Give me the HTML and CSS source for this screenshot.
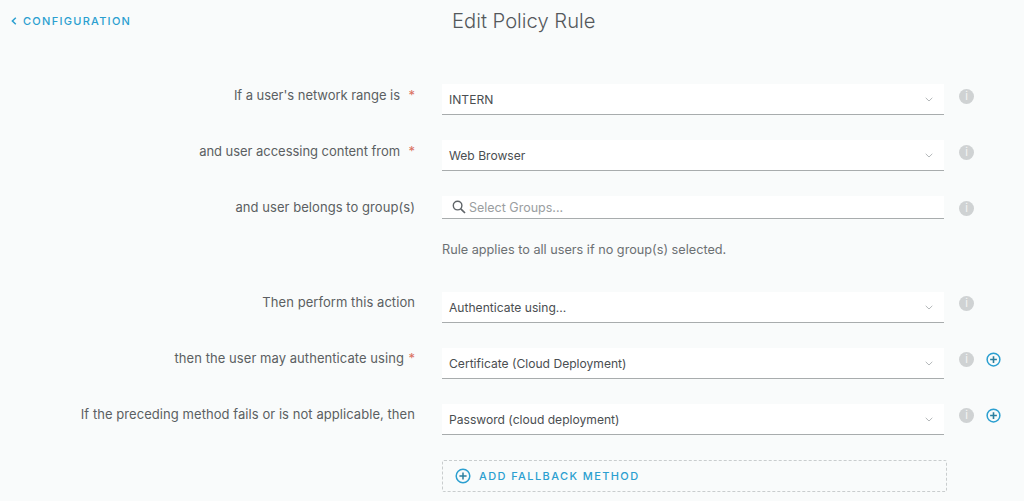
FILE: index.html
```html
<!DOCTYPE html>
<html lang="en">
<head>
<meta charset="utf-8">
<title>Edit Policy Rule</title>
<link rel="stylesheet" href="styles.css">
</head>
<body>
<header class="top">
  <a class="back" href="#"><svg class="chev" viewBox="0 0 6 8" width="6" height="8"><path d="M4.8 .8 1.4 4l3.4 3.2" fill="none" stroke="#2b9fd0" stroke-width="1.5"/></svg><span>CONFIGURATION</span></a>
  <h1 class="title">Edit Policy Rule</h1>
</header>
<main class="form">
  <div class="row">
    <label class="lab snug">If a user's network range is<span class="star">*</span></label>
    <div class="sel"><span>INTERN</span><svg class="caret" viewBox="0 0 8 5" width="8" height="5"><path d="M.7.8 4 4 7.3.8" fill="none" stroke="#b4b8ba" stroke-width="1"/></svg></div>
    <div class="acts"><span class="info">i</span></div>
  </div>
  <div class="row">
    <label class="lab snug">and user accessing content from<span class="star">*</span></label>
    <div class="sel"><span>Web Browser</span><svg class="caret" viewBox="0 0 8 5" width="8" height="5"><path d="M.7.8 4 4 7.3.8" fill="none" stroke="#b4b8ba" stroke-width="1"/></svg></div>
    <div class="acts"><span class="info">i</span></div>
  </div>
  <div class="row short">
    <label class="lab">and user belongs to group(s)</label>
    <div class="sel search"><svg class="mag" viewBox="0 0 14 14" width="14" height="14"><circle cx="5.6" cy="5.6" r="4.3" fill="none" stroke="#5f6468" stroke-width="1.4"/><path d="m8.8 8.8 4.2 4.2" stroke="#5f6468" stroke-width="1.7"/></svg><span class="ph">Select Groups...</span></div>
    <div class="acts"><span class="info">i</span></div>
  </div>
  <p class="hint">Rule applies to all users if no group(s) selected.</p>
  <div class="row alt">
    <label class="lab">Then perform this action</label>
    <div class="sel"><span>Authenticate using...</span><svg class="caret" viewBox="0 0 8 5" width="8" height="5"><path d="M.7.8 4 4 7.3.8" fill="none" stroke="#b4b8ba" stroke-width="1"/></svg></div>
    <div class="acts"><span class="info">i</span></div>
  </div>
  <div class="row alt">
    <label class="lab">then the user may authenticate using<span class="star tight">*</span></label>
    <div class="sel"><span>Certificate (Cloud Deployment)</span><svg class="caret" viewBox="0 0 8 5" width="8" height="5"><path d="M.7.8 4 4 7.3.8" fill="none" stroke="#b4b8ba" stroke-width="1"/></svg></div>
    <div class="acts"><span class="info">i</span><svg class="plus" viewBox="0 0 16 16" width="15" height="15"><circle cx="8" cy="8" r="6.8" fill="none" stroke="#2b9fd0" stroke-width="1.6"/><path d="M4.4 8h7.2M8 4.4v7.2" stroke="#2b7f9f" stroke-width="1.7"/></svg></div>
  </div>
  <div class="row alt">
    <label class="lab">If the preceding method fails or is not applicable, then</label>
    <div class="sel"><span>Password (cloud deployment)</span><svg class="caret" viewBox="0 0 8 5" width="8" height="5"><path d="M.7.8 4 4 7.3.8" fill="none" stroke="#b4b8ba" stroke-width="1"/></svg></div>
    <div class="acts"><span class="info">i</span><svg class="plus" viewBox="0 0 16 16" width="15" height="15"><circle cx="8" cy="8" r="6.8" fill="none" stroke="#2b9fd0" stroke-width="1.6"/><path d="M4.4 8h7.2M8 4.4v7.2" stroke="#2b7f9f" stroke-width="1.7"/></svg></div>
  </div>
  <button class="add" type="button"><svg class="addi" viewBox="0 0 16 16" width="16" height="16"><circle cx="8" cy="8" r="6.8" fill="none" stroke="#2b9fd0" stroke-width="1.5"/><path d="M4.4 8h7.2M8 4.4v7.2" stroke="#2b7f9f" stroke-width="1.5"/></svg><span>ADD FALLBACK METHOD</span></button>
</main>
</body>
</html>
```
FILE: styles.css
```css
* { box-sizing: border-box; }
html, body { margin: 0; height: 501px; overflow: hidden; }
body { background: #f9fbfb; font-family: "Inter", "Liberation Sans", sans-serif; color: #5b5f62; font-size: 12px; }
.top { height: 42px; display: grid; grid-template-columns: 441px auto; align-items: center; padding: 0 0 0 11px; }
.back { display: flex; align-items: center; gap: 6px; color: #2b9fd0; text-decoration: none; font-size: 11px; font-weight: 500; letter-spacing: 1.28px; }
.title { margin: 0 0 2px; font-size: 20.2px; font-weight: 300; color: #54585b; }
.form { padding: 42px 0 0 0; }
.row { display: grid; grid-template-columns: 442px 502px auto; height: 31px; margin-bottom: 25px; }
.row.short { height: 23px; margin-bottom: 0; }
.lab { text-align: right; padding: 2px 27px 0 0; font-size: 13px; letter-spacing: .06px; line-height: 18px; white-space: nowrap; }
.lab.snug { letter-spacing: -.04px; }
.alt .lab { padding-top: 1px; }
.star { color: #d9705f; margin-left: 8px; display: inline-block; width: 7px; }
.star.tight { margin-left: 4px; }
.sel { display: flex; align-items: center; justify-content: space-between; background: #fff; border-bottom: 1px solid #a8acad; padding: 1px 11px 0 7px; font-size: 12.1px; color: #4a4e51; }
.search { justify-content: flex-start; padding-left: 10px; gap: 3px; align-items: flex-start; padding-top: 4px; }
.ph { color: #9a9ea1; font-size: 12.5px; }
.acts { display: flex; align-items: flex-start; gap: 12px; padding: 5px 0 0 15px; }
.alt .acts { padding-top: 4px; }
.info { width: 15px; height: 15px; border-radius: 50%; background: #cfd2d3; color: #f4f5f5; font-size: 11px; line-height: 15px; text-align: center; }
.hint { margin: 0 0 34px 442px; padding-top: 23px; font-size: 12.7px; line-height: 16px; color: #6c7073; }
.add { display: flex; align-items: center; gap: 8px; width: 505px; height: 32px; margin: 0 0 0 442px; padding: 0 0 0 12px; background: transparent; border: 1px dashed #c9cdce; border-radius: 2px; color: #2b9fd0; font: 500 11px "Inter", "Liberation Sans", sans-serif; letter-spacing: 1.4px; }
```
